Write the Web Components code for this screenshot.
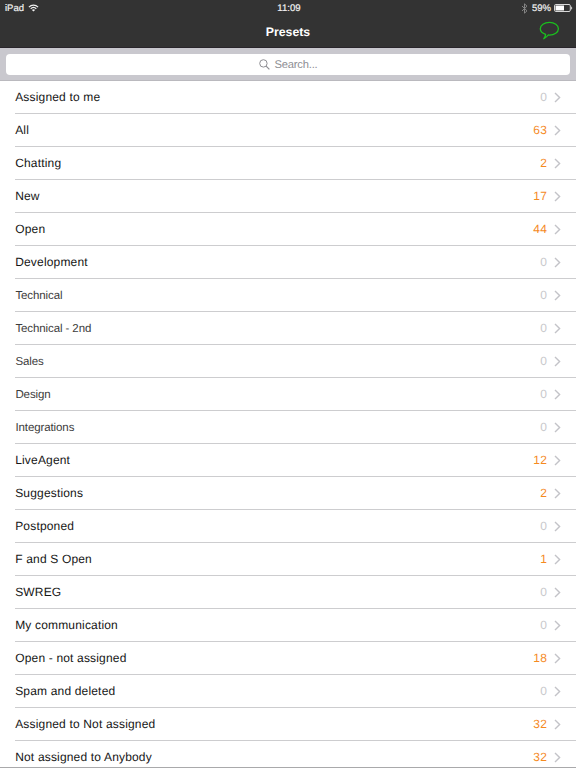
<!DOCTYPE html>
<html lang="en">
<head>
<meta charset="utf-8">
<title>Presets</title>
<style>
  body {
    margin: 0;
    background: #fff;
    font-family: "Liberation Sans", Arial, sans-serif;
    text-rendering: geometricPrecision;
  }
</style>
</head>
<body>
<presets-app></presets-app>

<script>
class StatusBar extends HTMLElement {
  constructor () {
    super()
    this.attachShadow({ mode: 'open' })
  }

  connectedCallback () {
    this.shadowRoot.innerHTML = `
    <style>
    :host {
      display: grid;
      grid-template-columns: 1fr auto 1fr;
      align-items: center;
      height: 16px;
      padding: 0 3px 0 5px;
      color: #f2f2f2;
      font-size: 9.5px;
      line-height: 16px;
    }
    .side { display: flex; align-items: center; -webkit-text-stroke: 0.2px; }
    .side span, .clock { padding-top: 2px; line-height: 14px; }
    .right { justify-content: flex-end; }
    .clock { font-size: 9.6px; -webkit-text-stroke: 0.2px; }
    .wifi { margin-left: 4px; }
    .bluetooth { margin-right: 4px; }
    .battery { margin-left: 3px; }
    svg { display: block; }
    </style>
    <div class="side">
      <span class="device">iPad</span>
      <svg class="wifi" width="11" height="8" viewBox="0 0 11 8" fill="none" stroke="#f2f2f2" stroke-width="1.2">
        <path d="M0.9 3.1C3.5 0.4 7.5 0.4 10.1 3.1M2.7 4.8C4.4 3.2 6.6 3.2 8.3 4.8"/>
        <path d="M3.9 5.9Q5.5 4.8 7.1 5.9L5.5 7.6Z" fill="#f2f2f2" stroke="none"/>
      </svg>
    </div>
    <span class="clock">11:09</span>
    <div class="side right">
      <svg class="bluetooth" width="7" height="11" viewBox="0 0 7 11" fill="none" stroke="#858585" stroke-width="1">
        <path d="M1 3L6 7.8L3.5 10.2V0.8L6 3.2L1 8"/>
      </svg>
      <span>59%</span>
      <svg class="battery" width="19" height="8" viewBox="0 0 19 8">
        <rect x="0.5" y="0.5" width="15.8" height="7" rx="1.3" fill="none" stroke="#d8d8d8"/>
        <rect x="1.5" y="1.5" width="8.5" height="5" fill="#fff"/>
        <path d="M17.1 2.2Q19.4 4 17.1 5.8Z" fill="#d8d8d8"/>
      </svg>
    </div>
    `
  }
}

class NavBar extends HTMLElement {
  constructor () {
    super()
    this.attachShadow({ mode: 'open' })
  }

  connectedCallback () {
    this.shadowRoot.innerHTML = `
    <style>
    :host {
      display: grid;
      grid-template-columns: 1fr auto 1fr;
      align-items: center;
      box-sizing: border-box;
      height: 32px;
      border-bottom: 1px solid #29252b;
    }
    .title {
      grid-column: 2;
      color: #fff;
      font-size: 12.3px;
      font-weight: bold;
      line-height: 32px;
    }
    svg { justify-self: end; margin: -3px 16px 0 0; }
    </style>
    <span class="title"><slot></slot></span>
    <svg width="21" height="19" viewBox="0 0 21 19" fill="none" stroke="#1bbf1e" stroke-width="1.3" stroke-linejoin="round">
      <path d="M6.6 13.4C3.4 12.3 1.3 10.2 1.3 7.8C1.3 4.2 5.3 1.4 10.4 1.4S19.4 4.2 19.4 7.8S15.4 14.1 10.4 14.1L9.2 14Q7.6 16.3 4.8 17.7Q6.5 15.6 6.6 13.4Z"/>
    </svg>
    `
  }
}

class SearchField extends HTMLElement {
  constructor () {
    super()
    this.attachShadow({ mode: 'open' })
  }

  connectedCallback () {
    this.shadowRoot.innerHTML = `
    <style>
    :host {
      display: block;
      box-sizing: border-box;
      height: 33px;
      padding: 6px 6px 5px;
      background: #c9c8ce;
      border-bottom: 1px solid #bab9be;
    }
    .field {
      display: flex;
      align-items: center;
      justify-content: center;
      gap: 5px;
      height: 21px;
      border-radius: 4px;
      background: #fff;
      color: #8e8e93;
      font-size: 11.2px;
      letter-spacing: -0.2px;
    }
    .hint { line-height: 12px; padding-top: 1px; }
    </style>
    <div class="field">
      <svg width="11" height="11" viewBox="0 0 11 11" fill="none" stroke="#8e8e93">
        <circle cx="4.4" cy="4.4" r="3.7"/>
        <path d="M7.1 7.1L10.4 10.4" stroke-width="1.2"/>
      </svg>
      <span class="hint"><slot></slot></span>
    </div>
    `
  }
}

class PresetRow extends HTMLElement {
  constructor () {
    super()
    this.attachShadow({ mode: 'open' })
  }

  connectedCallback () {
    const count = this.getAttribute('count')
    this.shadowRoot.innerHTML = `
    <style>
    :host {
      display: flex;
      align-items: center;
      box-sizing: border-box;
      height: 33px;
      margin-left: 15px;
      padding-right: 15px;
      border-bottom: 1px solid #cdcdcf;
      color: #161616;
      font-size: 12px;
      line-height: 14px;
      letter-spacing: 0.17px;
    }
    .label { flex: 1; padding-bottom: 1px; text-indent: 0.2px; }
    :host([plain]) .label {
      padding: 1px 0 0;
      color: #3c3c3c;
      font-size: 11.5px;
      letter-spacing: -0.1px;
      text-indent: 0.4px;
    }
    .count { color: #f58a1f; margin-right: 7px; padding-bottom: 1px; }
    .count.empty { color: #c8c8cb; }
    </style>
    <span class="label"><slot></slot></span>
    <span class="count ${count === '0' ? 'empty' : ''}">${count}</span>
    <svg width="7" height="11" viewBox="0 0 7 11" fill="none" stroke="#c3c3c8" stroke-width="1.4">
      <path d="M1 1L5.6 5.5L1 10"/>
    </svg>
    `
  }
}

class PresetsApp extends HTMLElement {
  constructor () {
    super()
    this.attachShadow({ mode: 'open' })
  }

  connectedCallback () {
    this.shadowRoot.innerHTML = `
    <style>
    :host {
      display: flex;
      flex-direction: column;
      box-sizing: border-box;
      width: 576px;
      height: 768px;
      overflow: hidden;
      border-bottom: 1px solid #a9a9ab;
    }
    header { flex: none; background: #333; }
    search-field { flex: none; }
    main { flex: 1; min-height: 0; overflow: hidden; }
    </style>
    <header>
      <status-bar></status-bar>
      <nav-bar>Presets</nav-bar>
    </header>
    <search-field>Search...</search-field>
    <main>
      <preset-row count="0">Assigned to me</preset-row>
      <preset-row count="63">All</preset-row>
      <preset-row count="2">Chatting</preset-row>
      <preset-row count="17">New</preset-row>
      <preset-row count="44">Open</preset-row>
      <preset-row count="0">Development</preset-row>
      <preset-row count="0" plain>Technical</preset-row>
      <preset-row count="0" plain>Technical - 2nd</preset-row>
      <preset-row count="0" plain>Sales</preset-row>
      <preset-row count="0" plain>Design</preset-row>
      <preset-row count="0" plain>Integrations</preset-row>
      <preset-row count="12">LiveAgent</preset-row>
      <preset-row count="2">Suggestions</preset-row>
      <preset-row count="0">Postponed</preset-row>
      <preset-row count="1">F and S Open</preset-row>
      <preset-row count="0">SWREG</preset-row>
      <preset-row count="0">My communication</preset-row>
      <preset-row count="18">Open - not assigned</preset-row>
      <preset-row count="0">Spam and deleted</preset-row>
      <preset-row count="32">Assigned to Not assigned</preset-row>
      <preset-row count="32">Not assigned to Anybody</preset-row>
    </main>
    `
  }
}

customElements.define('status-bar', StatusBar)
customElements.define('nav-bar', NavBar)
customElements.define('search-field', SearchField)
customElements.define('preset-row', PresetRow)
customElements.define('presets-app', PresetsApp)
</script>
</body>
</html>
